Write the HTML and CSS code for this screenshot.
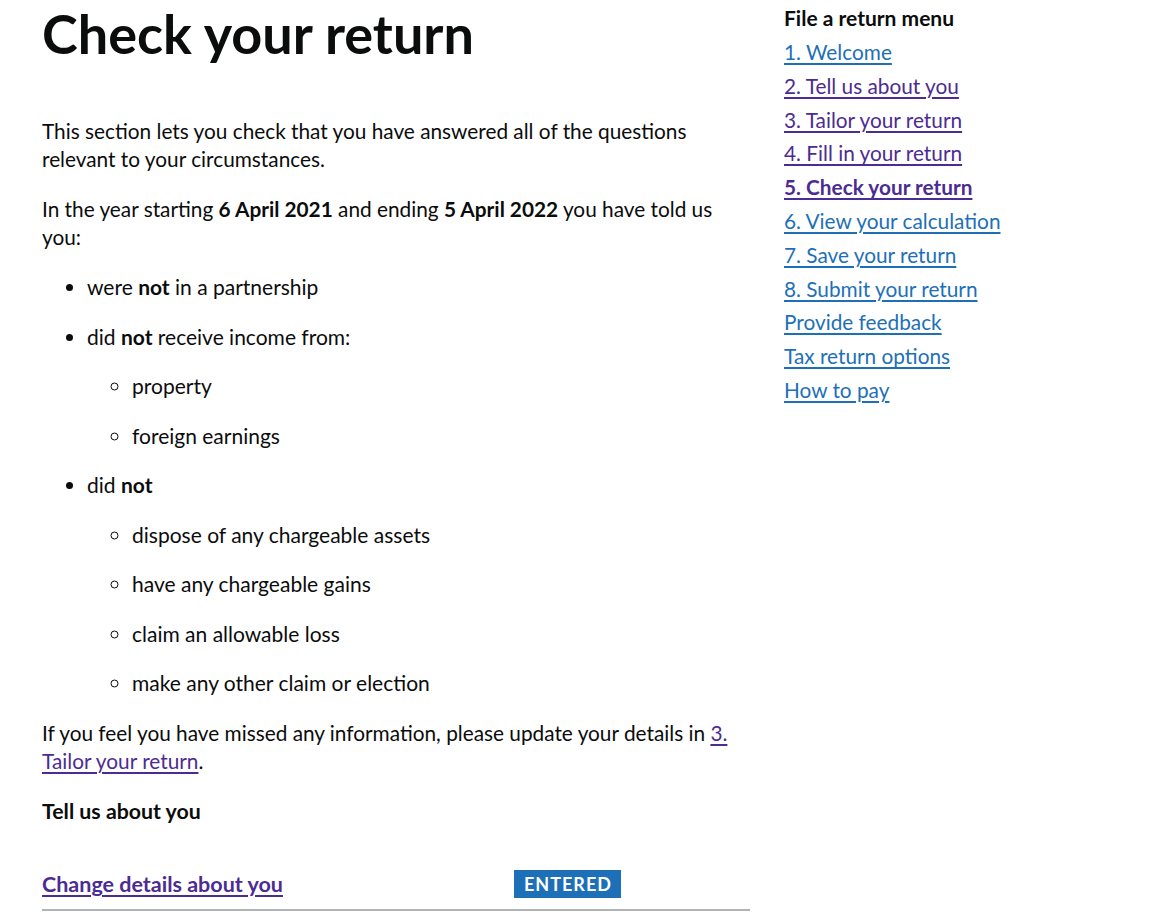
FILE: index.html
```html
<!DOCTYPE html>
<html lang="en">
<head>
<meta charset="utf-8">
<title>Check your return</title>
<link rel="stylesheet" href="styles.css">
</head>
<body>
<div class="page">
  <main class="main">
    <h1 class="title">Check your return</h1>
    <p class="body">This section lets you check that you have answered all of the questions relevant to your circumstances.</p>
    <p class="body">In the year starting <strong>6 April 2021</strong> and ending <strong>5 April 2022</strong> you have told us you:</p>
    <ul class="list">
      <li>were <strong>not</strong> in a partnership</li>
      <li>did <strong>not</strong> receive income from:
        <ul class="sublist">
          <li>property</li>
          <li>foreign earnings</li>
        </ul>
      </li>
      <li>did <strong>not</strong>
        <ul class="sublist">
          <li>dispose of any chargeable assets</li>
          <li>have any chargeable gains</li>
          <li>claim an allowable loss</li>
          <li>make any other claim or election</li>
        </ul>
      </li>
    </ul>
    <p class="body">If you feel you have missed any information, please update your details in <a class="link visited" href="#">3. Tailor your return</a>.</p>
    <h2 class="subhead">Tell us about you</h2>
    <div class="summary-row">
      <a class="link visited bold" href="#">Change details about you</a>
      <div class="status"><span class="tag">Entered</span></div>
    </div>
  </main>
  <nav class="menu">
    <h2 class="menu-title">File a return menu</h2>
    <ul class="menu-list">
      <li><a class="link" href="#">1. Welcome</a></li>
      <li><a class="link visited" href="#">2. Tell us about you</a></li>
      <li><a class="link visited" href="#">3. Tailor your return</a></li>
      <li><a class="link visited" href="#">4. Fill in your return</a></li>
      <li><a class="link visited bold" href="#">5. Check your return</a></li>
      <li><a class="link" href="#">6. View your calculation</a></li>
      <li><a class="link" href="#">7. Save your return</a></li>
      <li><a class="link" href="#">8. Submit your return</a></li>
      <li><a class="link" href="#">Provide feedback</a></li>
      <li><a class="link" href="#">Tax return options</a></li>
      <li><a class="link" href="#">How to pay</a></li>
    </ul>
  </nav>
</div>
</body>
</html>
```

FILE: styles.css
```css
html, body {
  margin: 0;
  padding: 0;
  background: #ffffff;
}
body {
  font-family: Lato, "Noto Sans", Arial, sans-serif;
  color: #0b0c0c;
  font-size: 21px;
  line-height: 28px;
}
.page {
  display: flex;
  padding: 4px 0 0 42px;
}
.main {
  width: 708px;
  flex: none;
}
.title {
  margin: 0 0 53px;
  font-size: 54px;
  line-height: 60px;
  font-weight: 700;
}
.body {
  margin: 0 0 22px;
  font-size: 20.8px;
}
strong, .bold {
  font-weight: 700;
}
.list {
  margin: 0 0 22px;
  padding-left: 45px;
  list-style: disc;
}
.list li {
  margin-bottom: 21.5px;
}
.sublist {
  margin: 21.5px 0 0;
  padding-left: 45px;
  list-style: circle;
}
.sublist li:last-child {
  margin-bottom: 0;
}
.subhead {
  margin: 0;
  font-size: 21.3px;
  line-height: 28px;
  font-weight: 700;
}
.summary-row {
  display: grid;
  grid-template-columns: 472px 1fr;
  align-items: center;
  margin-top: 44px;
  padding-bottom: 11px;
  border-bottom: 2px solid #b1b4b6;
}
.summary-row .link {
  font-size: 21.5px;
}
.tag {
  display: inline-block;
  background: #1d70b8;
  color: #ffffff;
  font-weight: 700;
  font-size: 18px;
  line-height: 28px;
  letter-spacing: 1px;
  text-transform: uppercase;
  padding: 0 9px 0 10px;
}
.link {
  color: #1d70b8;
  text-decoration: underline;
  text-decoration-thickness: 1.5px;
  text-underline-offset: 3px;
}
.link.visited {
  color: #4c2c92;
}
.menu {
  margin-left: 34px;
  margin-top: -3px;
}
.menu-title {
  margin: 0;
  font-size: 21px;
  line-height: 34px;
  font-weight: 700;
}
.menu-list {
  list-style: none;
  margin: 0;
  padding: 0;
}
.menu-list li {
  line-height: 33.8px;
  font-size: 20.8px;
}
```
